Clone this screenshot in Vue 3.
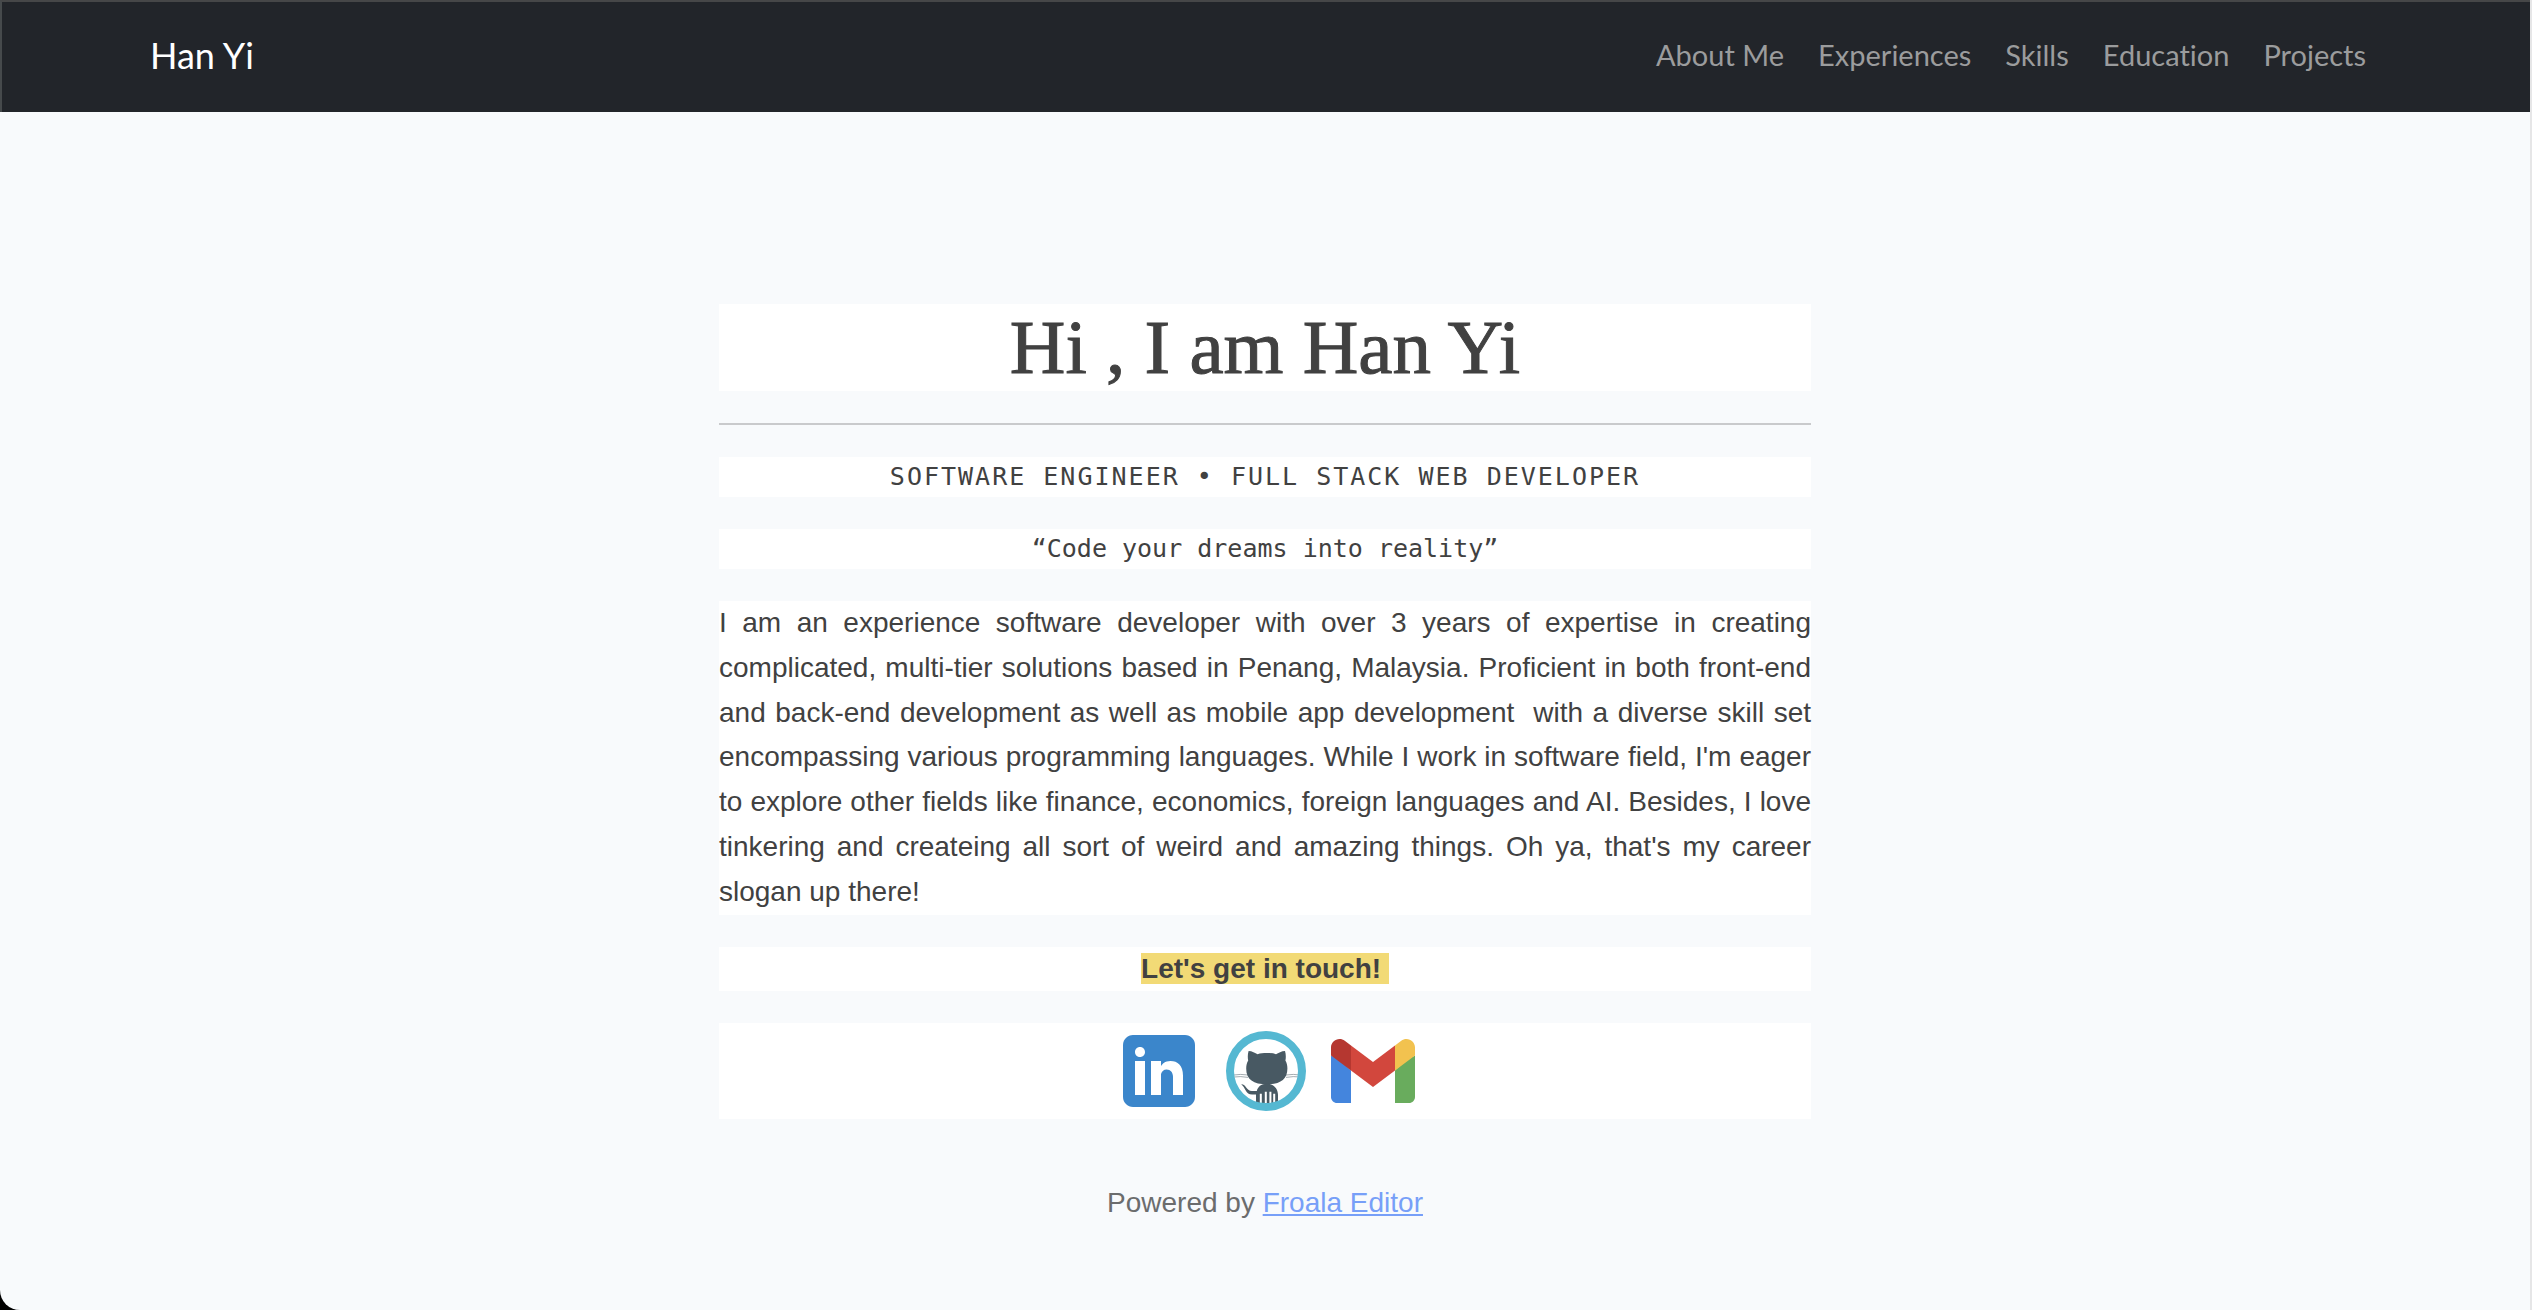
<script setup>
const links = ['About Me', 'Experiences', 'Skills', 'Education', 'Projects']
</script>

<template>
  <div class="page">
    <header class="navbar">
      <nav class="container">
        <a class="brand" href="#">Han Yi</a>
        <ul class="links">
          <li v-for="link in links" :key="link"><a href="#">{{ link }}</a></li>
        </ul>
      </nav>
    </header>

    <main class="content">
      <h1>Hi , I am Han Yi</h1>
      <hr />
      <p class="mono role">SOFTWARE ENGINEER • FULL STACK WEB DEVELOPER</p>
      <p class="mono">“Code your dreams into reality”</p>
      <p class="bio">
        I am an experience software developer with over 3 years of expertise in creating complicated,
        multi-tier solutions based in Penang, Malaysia. Proficient in both front-end and back-end
        development as well as mobile app development&nbsp; with a diverse skill set encompassing
        various programming languages. While I work in software field, I'm eager to explore other
        fields like finance, economics, foreign languages and AI. Besides, I love tinkering and
        createing all sort of weird and amazing things. Oh ya, that's my career slogan up there!
      </p>
      <p class="touch"><strong>Let's get in touch!&nbsp;</strong></p>
      <div class="social">
        <a href="#" aria-label="LinkedIn">
          <svg viewBox="0 0 48 48">
            <path fill="#3b86cb" d="M42 37c0 2.762-2.238 5-5 5H11c-2.761 0-5-2.238-5-5V11c0-2.762 2.239-5 5-5h26c2.762 0 5 2.238 5 5v26z" />
            <path fill="#fff" d="M12 19h5v17h-5zM14.485 17h-.028C12.965 17 12 15.888 12 14.499 12 13.08 12.995 12 14.514 12c1.521 0 2.458 1.08 2.486 2.499C17 15.887 16.035 17 14.485 17zM36 36h-5v-9.099c0-2.198-1.225-3.698-3.192-3.698-1.501 0-2.313 1.012-2.707 1.99C24.957 25.543 25 26.511 25 27v9h-5V19h5v2.616C25.721 20.5 26.85 19 29.738 19c3.578 0 6.261 2.25 6.261 7.274L36 36z" />
          </svg>
        </a>
        <a href="#" aria-label="GitHub">
          <svg viewBox="0 0 48 48">
            <circle cx="24" cy="24" r="18" fill="#fff" />
            <path fill="none" stroke="#485963" stroke-width=".25" d="M8 26q3-.6 7 0M8 27q3-.5 7 .2M41 26q-3-.6-7 0M41 27q-3-.5-7 .2" />
            <path fill="#485963" d="M15.300 14C17 14 18.600 15 19.800 15.600 21.200 15.100 22.600 15 24.400 15S27.600 15.100 29 15.600C30.200 15 31.800 14 33.500 14 34 15.500 34 17.300 33.700 18.800 34.400 19.900 34.700 21.200 34.700 22.800 34.700 28.400 31 30.700 24.400 30.700S14.100 28.400 14.100 22.800C14.100 21.200 14.400 19.900 15.100 18.800 14.800 17.300 14.800 15.500 15.300 14z" />
            <path fill="#485963" d="M24.400 30.400C21.500 30.400 19.900 32 19.400 34H17C15.500 34 14.700 33 13.900 32 13.200 31 12.500 30.600 11.700 30.700 12.700 31.500 13.100 32.400 13.700 33.500 14.500 35 15.500 35.800 17 35.800H19V42H30V36C30 33 28.200 30.400 24.400 30.400z" />
            <path stroke="#fff" d="M21.400 35.400V42M23.900 34.400V42M26.200 34.400V42M28.100 35.400V42" />
            <circle cx="24" cy="24" r="18" fill="none" stroke="#55b8d2" stroke-width="4" />
          </svg>
        </a>
        <a href="#" aria-label="Gmail">
          <svg viewBox="0 0 48 48">
            <path fill="#69ac5d" d="M45 16.200l-5 2.750-5 4.750V40h7c1.657 0 3-1.343 3-3V16.200z" />
            <path fill="#4485dd" d="M3 16.200l3.614 1.710L13 23.700V40H6c-1.657 0-3-1.343-3-3V16.200z" />
            <path fill="#d2473d" d="M35 11.200L24 19.450 13 11.200 12 17l1 6.700 11 8.250 11-8.250 1-6.700z" />
            <path fill="#b53730" d="M3 12.298V16.200l10 7.500V11.200L9.876 8.859C9.132 8.301 8.228 8 7.298 8 4.924 8 3 9.924 3 12.298z" />
            <path fill="#f2c24f" d="M45 12.298V16.200l-10 7.500V11.200l3.124-2.341C38.868 8.301 39.772 8 40.702 8 43.076 8 45 9.924 45 12.298z" />
          </svg>
        </a>
      </div>
      <footer>Powered by <a href="#">Froala Editor</a></footer>
    </main>
  </div>
</template>

<style>
body {
  background: #000;
}
</style>

<style scoped>
.page {
  box-sizing: border-box;
  min-height: 100vh;
  border-right: 2px solid #e6e6e7;
  border-radius: 0 0 0 20px;
  background: #f8fafc;
  color: #414141;
  font: 28px/1.6 "Liberation Sans", Arial, sans-serif;
}
.navbar {
  box-sizing: border-box;
  height: 112px;
  border-top: 2px solid #464748;
  border-left: 2px solid #464a4c;
  background: #22252a;
  font-family: Lato, sans-serif;
  font-variant-ligatures: none;
}
.container {
  box-sizing: border-box;
  display: flex;
  justify-content: space-between;
  align-items: center;
  height: 100%;
  max-width: 2232px;
  margin: 0 auto;
  padding-bottom: 3px;
}
.brand {
  color: #fff;
  font-size: 36px;
  text-decoration: none;
}
.links {
  display: flex;
  gap: 2px;
  margin: 0;
  padding: 0;
  list-style: none;
  font-size: 29px;
}
.links a {
  padding: 0 16px;
  color: #9b9c9d;
  text-decoration: none;
}
.content {
  display: flex;
  flex-direction: column;
  gap: 32px;
  max-width: 1092px;
  margin: 0 auto;
  padding: 192px 0 80px;
}
h1,
p,
.social {
  margin: 0;
  background: #fff;
  text-align: center;
}
h1 {
  font: 77px/87px "Liberation Serif", serif;
  -webkit-text-stroke: 1px #414141;
}
hr {
  width: 100%;
  height: 2px;
  margin: 0;
  border: 0;
  background: #c9cacc;
}
.mono {
  font: 25px/40px "DejaVu Sans Mono", monospace;
}
.role {
  letter-spacing: 2px;
}
.bio {
  text-align: justify;
}
strong {
  background: #f2da76;
}
.social {
  display: flex;
  justify-content: center;
  gap: 11px;
  padding-left: 2px;
}
.social a,
.social svg {
  display: block;
  width: 96px;
  height: 96px;
}
footer {
  padding-top: 30px;
  color: #6b6c6d;
  text-align: center;
}
footer a {
  color: #779ff8;
}
</style>
